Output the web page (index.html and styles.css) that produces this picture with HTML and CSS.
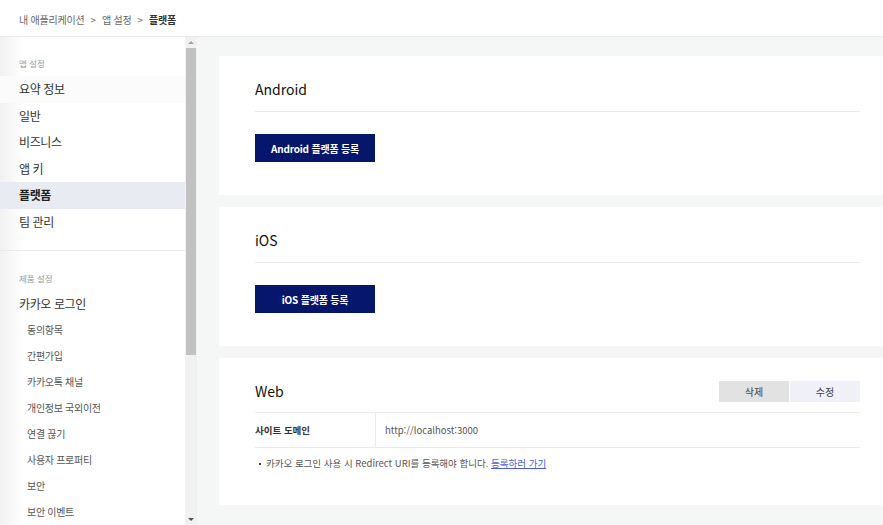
FILE: index.html
```html
<!DOCTYPE html>
<html lang="ko">
<head>
    <meta charset="UTF-8">
    <title>플랫폼 - 앱 설정</title>
    <link rel="stylesheet" href="styles.css">
</head>
<body>
    <div class="header">
        <div class="breadcrumb">
            <span>내 애플리케이션</span>
            <span class="sep">&gt;</span>
            <span>앱 설정</span>
            <span class="sep">&gt;</span>
            <strong>플랫폼</strong>
        </div>
    </div>

    <div class="wrap">
        <!-- 사이드 메뉴 -->
        <div class="side">
            <div class="side-group">
                <div class="side-title">앱 설정</div>
                <a class="menu hover">요약 정보</a>
                <a class="menu">일반</a>
                <a class="menu">비즈니스</a>
                <a class="menu">앱 키</a>
                <a class="menu on">플랫폼</a>
                <a class="menu">팀 관리</a>
            </div>
            <div class="side-group">
                <div class="side-title">제품 설정</div>
                <a class="menu">카카오 로그인</a>
                <a class="sub">동의항목</a>
                <a class="sub">간편가입</a>
                <a class="sub">카카오톡 채널</a>
                <a class="sub">개인정보 국외이전</a>
                <a class="sub">연결 끊기</a>
                <a class="sub">사용자 프로퍼티</a>
                <a class="sub">보안</a>
                <a class="sub">보안 이벤트</a>
            </div>
        </div>
        <div class="scrollbar">
            <div class="arrow up"></div>
            <div class="track"><div class="thumb"></div></div>
            <div class="arrow down"></div>
        </div>

        <!-- 플랫폼 목록 -->
        <div class="main">
            <div class="card">
                <div class="card-head">
                    <h2>Android</h2>
                </div>
                <button class="btn-add">Android 플랫폼 등록</button>
            </div>

            <div class="card">
                <div class="card-head">
                    <h2>iOS</h2>
                </div>
                <button class="btn-add">iOS 플랫폼 등록</button>
            </div>

            <div class="card web">
                <div class="card-head">
                    <h2>Web</h2>
                    <div class="btns">
                        <button class="btn-del">삭제</button>
                        <button class="btn-edit">수정</button>
                    </div>
                </div>
                <div class="row">
                    <div class="th">사이트 도메인</div>
                    <div class="td">http://localhost:3000</div>
                </div>
                <ul class="notice">
                    <li>카카오 로그인 사용 시 Redirect URI를 등록해야 합니다. <a href="#">등록하러 가기</a></li>
                </ul>
            </div>
        </div>
    </div>
</body>
</html>
```

FILE: styles.css
```css
/* 기본 */
html, body {
    height: 100%;
}

body {
    margin: 0;
    font-family: 'Noto Sans CJK KR', 'Noto Sans', sans-serif;
    color: #333;
    background: #fff;
    display: flex;
    flex-direction: column;
    overflow: hidden;
}

/* 상단 */
.header {
    height: 36px;
    flex-shrink: 0;
    border-bottom: 1px solid #ebebeb;
    display: flex;
    align-items: center;
    padding-left: 19px;
}

.breadcrumb {
    font-size: 10px;
    letter-spacing: -0.2px;
    color: #666;
    display: flex;
    gap: 6px;
    padding-top: 2px;
}

.breadcrumb strong {
    color: #333;
    font-weight: 700;
}

.wrap {
    flex: 1;
    display: flex;
    min-height: 0;
}

/* 사이드 메뉴 */
.side {
    width: 185px;
    flex-shrink: 0;
    overflow: hidden;
    background: linear-gradient(to right, #f1f1f1, #fff 24px);
}

.side-group {
    padding: 18px 0 14px;
    border-bottom: 1px solid #e9e9e9;
}

.side-group + .side-group {
    padding-top: 19px;
    border-bottom: none;
}

.side-title {
    font-size: 8.5px;
    color: #999;
    line-height: 16px;
    padding-left: 19px;
    margin-bottom: 5px;
}

.menu {
    display: block;
    height: 26.6px;
    line-height: 26.6px;
    padding-left: 19px;
    font-size: 12px;
    letter-spacing: -0.4px;
    color: #333;
}

.menu.hover {
    background: #fbfbfb;
}

.menu.on {
    background: #e8ebf2;
    font-weight: 700;
    color: #222;
}

.sub {
    display: block;
    height: 26px;
    line-height: 26px;
    padding-left: 27px;
    font-size: 10px;
    letter-spacing: -0.3px;
    color: #555;
}

/* 스크롤바 */
.scrollbar {
    width: 12px;
    flex-shrink: 0;
    background: #f1f1f1;
    display: flex;
    flex-direction: column;
}

.track {
    flex: 1;
    padding: 0 1px;
}

.thumb {
    height: 307px;
    background: #c1c1c1;
}

.arrow {
    height: 11px;
    display: flex;
    justify-content: center;
    align-items: center;
}

.arrow::after {
    content: '';
    border-left: 3px solid transparent;
    border-right: 3px solid transparent;
}

.arrow.up::after {
    border-bottom: 3px solid #a3a3a3;
}

.arrow.down::after {
    border-top: 3px solid #505050;
}

/* 메인 */
.main {
    flex: 1;
    background: #f5f6f6;
    padding: 19px 0 0 22px;
    display: flex;
    flex-direction: column;
    gap: 12px;
    overflow: hidden;
}

.card {
    background: #fff;
    padding: 0 23px 33px 36px;
}

.card.web {
    padding-bottom: 35px;
}

.card-head {
    display: flex;
    justify-content: space-between;
    align-items: center;
    padding: 22px 0 11px;
    border-bottom: 1px solid #ebebeb;
}

.web .card-head {
    padding-bottom: 10px;
}

.card-head h2 {
    margin: 0;
    font-size: 14px;
    font-weight: 400;
    line-height: 22px;
    color: #111;
}

.btn-add {
    margin-top: 22px;
    width: 120px;
    height: 28px;
    border: none;
    background: #06166b;
    color: #fff;
    font-family: inherit;
    font-size: 10px;
    letter-spacing: -0.2px;
    font-weight: 700;
    cursor: pointer;
}

.btns {
    display: flex;
    gap: 1px;
}

.btns button {
    width: 70px;
    height: 21px;
    border: none;
    font-family: inherit;
    font-size: 10px;
    color: #444;
    cursor: pointer;
}

.btn-del {
    background: #e2e2e2;
}

.btn-edit {
    background: #f0f1f8;
}

/* 표 */
.row {
    display: flex;
    height: 34px;
    border-bottom: 1px solid #ebebeb;
    font-size: 9.5px;
}

.th {
    width: 120px;
    border-right: 1px solid #ebebeb;
    display: flex;
    align-items: center;
    font-weight: 700;
    color: #333;
}

.td {
    padding-left: 9px;
    display: flex;
    align-items: center;
    color: #555;
}

.notice {
    margin: 0;
    padding: 8px 0 0 4px;
    list-style: none;
    font-size: 9.5px;
    color: #555;
}

.notice li::before {
    content: '';
    display: inline-block;
    width: 2px;
    height: 2px;
    background: #444;
    vertical-align: middle;
    margin-right: 5px;
}

.notice a {
    color: #4a5de0;
    text-decoration: underline;
}
```
